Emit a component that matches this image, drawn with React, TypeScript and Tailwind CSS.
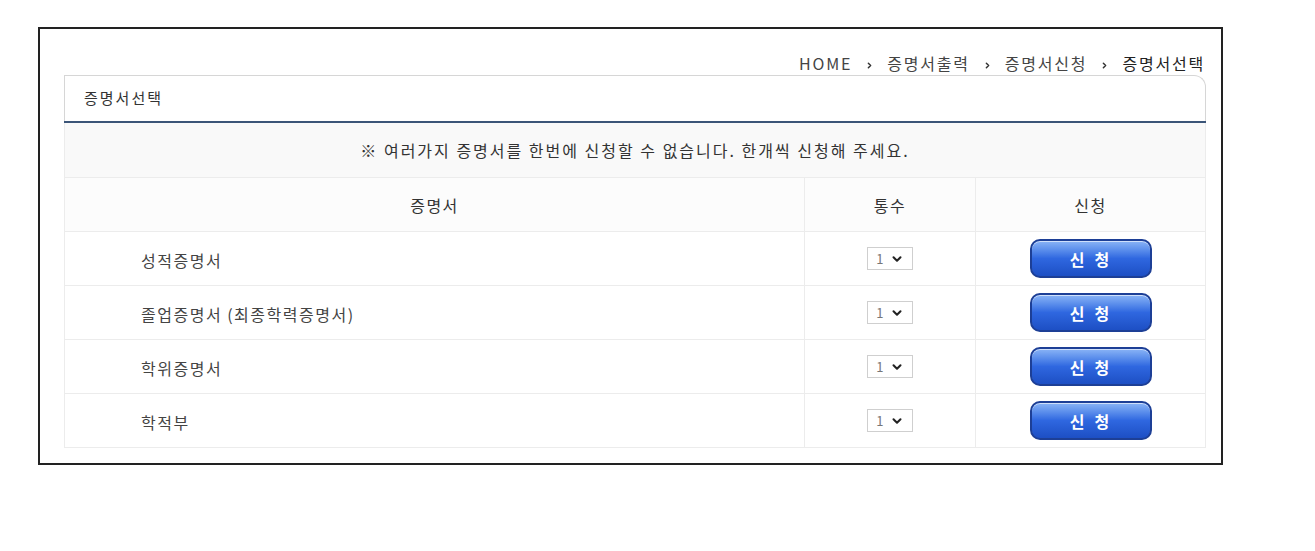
import { ChevronDown, ChevronRight } from 'lucide-react'

const certs = ['성적증명서', '졸업증명서 (최종학력증명서)', '학위증명서', '학적부']

const font = { fontFamily: '"Noto Sans CJK KR", "Noto Sans", sans-serif' }

function Crumb({ children, last }: { children: string; last?: boolean }) {
  return (
    <>
      <span className={last ? 'text-[#222]' : 'text-[#444]'}>{children}</span>
      {!last && (
        <span className="mx-[13px] relative -top-[5px] text-[#333]">
          <ChevronRight size={9} strokeWidth={4} />
        </span>
      )}
    </>
  )
}

function ApplyButton() {
  return (
    <button className="w-[122px] h-[39px] rounded-[10px] border-2 border-[#1d3f96] bg-gradient-to-b from-[#8ab4f6] via-[#2f67e0] to-[#1d4fc4] text-white text-[16px] font-bold tracking-[0.2em] shadow-[inset_0_1px_0_rgba(255,255,255,0.6)]">
      신 청
    </button>
  )
}

function CountSelect() {
  return (
    <div className="w-[46px] h-[23px] border border-[#cfcfcf] bg-white flex items-center justify-center gap-[5px]">
      <span className="text-[13px] text-[#777]">1</span>
      <ChevronDown size={14} strokeWidth={3.5} className="text-[#222]" />
    </div>
  )
}

export default function App() {
  return (
    <div className="w-[1315px] h-[551px] bg-white pt-[27px] pl-[38px]" style={font}>
      <div className="w-[1185px] h-[438px] border-2 border-[#222] pl-[24px] pr-[15px]">
        <div className="h-[47px] flex items-end justify-end pb-[1px] text-[16px] tracking-[1.8px] pr-[1px]">
          <Crumb>HOME</Crumb>
          <Crumb>증명서출력</Crumb>
          <Crumb>증명서신청</Crumb>
          <Crumb last>증명서선택</Crumb>
        </div>

        <div className="mt-[-1px] h-[46px] border border-b-0 border-[#d6d6d6] rounded-tr-[12px] flex items-center pl-[19px] text-[15px] tracking-[2px] text-[#333]">
          증명서선택
        </div>
        <div className="h-[2px] bg-[#3b5578]" />

        <div className="border-x border-[#ececec] tracking-[1.5px]">
          <div className="h-[55px] bg-[#f9f9f9] border-b border-[#ececec] flex items-center justify-center text-[16px] tracking-[2px] text-[#333]">
            ※ 여러가지 증명서를 한번에 신청할 수 없습니다. 한개씩 신청해 주세요.
          </div>

          <div className="grid grid-cols-[740px_171px_1fr] h-[54px] bg-[#fcfcfc] border-b border-[#ececec] text-[16px] text-[#333]">
            <div className="flex items-center justify-center border-r border-[#ececec]">증명서</div>
            <div className="flex items-center justify-center border-r border-[#ececec]">통수</div>
            <div className="flex items-center justify-center">신청</div>
          </div>

          {certs.map((c) => (
            <div key={c} className="grid grid-cols-[740px_171px_1fr] h-[54px] border-b border-[#ececec] text-[16px] text-[#444]">
              <div className="flex items-center pl-[76px] pt-[2px] border-r border-[#ececec]">{c}</div>
              <div className="flex items-center justify-center border-r border-[#ececec]">
                <CountSelect />
              </div>
              <div className="flex items-center justify-center pl-[1px]">
                <ApplyButton />
              </div>
            </div>
          ))}
        </div>
      </div>
    </div>
  )
}
